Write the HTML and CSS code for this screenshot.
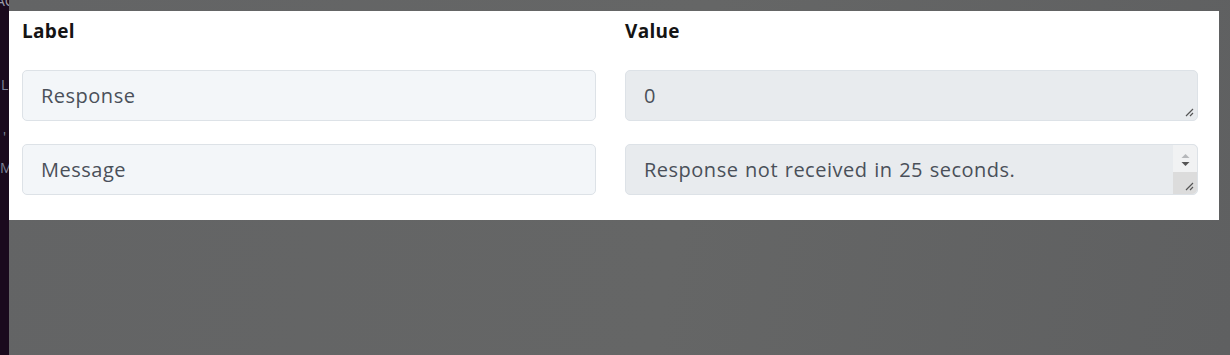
FILE: index.html
```html
<!DOCTYPE html>
<html>
<head>
  <meta charset="UTF-8">
  <title>Response mapping</title>
  <link rel="stylesheet" href="styles.css">
</head>
<body>
  <div class="page">
    <aside class="sidebar">
      <span class="side-text side-ac">AC</span>
      <span class="side-text side-l">L</span>
      <span class="side-text side-dot">'</span>
      <span class="side-text side-m">M</span>
    </aside>

    <main class="backdrop">
      <div class="modal">
        <div class="grid">
          <div class="head">Label</div>
          <div class="head">Value</div>

          <div class="field">Response</div>
          <div class="field field-disabled">
            0
            <svg class="grip" width="10" height="10" viewBox="0 0 10 10">
              <path d="M9 2 L2 9 M9 6 L6 9" stroke="#555" stroke-width="1.2" fill="none"/>
            </svg>
          </div>

          <div class="field">Message</div>
          <div class="field field-disabled field-scroll">
            Response not received in 25 seconds.
            <div class="scrollbar">
              <div class="scroll-arrows">
                <svg width="9" height="14" viewBox="0 0 9 14">
                  <path d="M4.5 1 L8.5 5 L0.5 5 Z" fill="#b5b7ba"/>
                  <path d="M0.5 9 L8.5 9 L4.5 13 Z" fill="#555"/>
                </svg>
              </div>
              <div class="scroll-corner">
                <svg width="10" height="10" viewBox="0 0 10 10">
                  <path d="M9 2 L2 9 M9 6 L6 9" stroke="#555" stroke-width="1.2" fill="none"/>
                </svg>
              </div>
            </div>
          </div>
        </div>
      </div>
    </main>
  </div>
</body>
</html>
```

FILE: styles.css
```css
* {
  box-sizing: border-box;
}

body {
  margin: 0;
  width: 1230px;
  height: 355px;
  overflow: hidden;
  font-family: 'Open Sans', Lato, sans-serif;
}

.page {
  display: flex;
  height: 355px;
}

.sidebar {
  position: relative;
  width: 9px;
  flex-shrink: 0;
  overflow: hidden;
  background-color: #1a0a1d;
}

.side-text {
  position: absolute;
  left: 1px;
  font-size: 14px;
  color: #7f8499;
}

.side-ac {
  top: -9px;
  left: -4px;
  color: #9a9ca8;
}

.side-l {
  top: 75px;
}

.side-dot {
  top: 127px;
  left: 3px;
}

.side-m {
  top: 158px;
  left: 0;
}

.backdrop {
  flex: 1;
  padding-top: 11px;
  background: linear-gradient(100deg, #636465 0%, #656666 55%, #5f6061 100%);
}

.modal {
  width: 1210px;
  height: 209px;
  padding: 7px 21px 0 13px;
  background-color: #fff;
}

.grid {
  display: grid;
  grid-template-columns: 574px 573px;
  column-gap: 29px;
  row-gap: 23px;
  grid-template-rows: 29px 51px 51px;
}

.head {
  font-size: 19px;
  font-weight: 700;
  letter-spacing: 0.3px;
  color: #141414;
}

.field {
  position: relative;
  display: flex;
  align-items: center;
  padding: 0 18px;
  height: 51px;
  font-size: 20px;
  letter-spacing: 0.5px;
  word-spacing: 1px;
  color: #4a5059;
  background-color: #f3f6f9;
  border: 1px solid #dde2e7;
  border-radius: 5px;
}

.field-disabled {
  background-color: #e8ebee;
}

.grip {
  position: absolute;
  right: 3px;
  bottom: 3px;
}

.scrollbar {
  position: absolute;
  top: 0;
  right: 0;
  bottom: 0;
  width: 24px;
  display: flex;
  flex-direction: column;
  border-radius: 0 5px 5px 0;
  overflow: hidden;
}

.scroll-arrows {
  flex: 1;
  display: flex;
  justify-content: center;
  padding-top: 8px;
  background-color: #f1f2f3;
}

.scroll-corner {
  height: 22px;
  display: flex;
  justify-content: flex-end;
  align-items: flex-end;
  padding: 0 3px 3px 0;
  background-color: #dcdcdc;
}
```
